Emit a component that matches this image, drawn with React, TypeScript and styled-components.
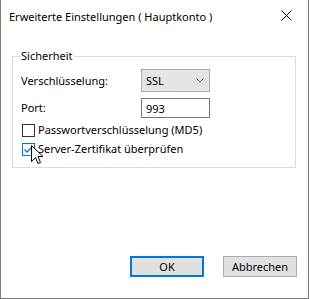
import styled, { createGlobalStyle } from 'styled-components'

const GlobalStyle = createGlobalStyle`
  html, body {
    margin: 0;
    padding: 0;
    background: #ffffff;
  }
  body {
    font-family: 'Noto Sans', 'Liberation Sans', sans-serif;
    font-size: 11px;
    color: #000000;
  }
`

const Window = styled.div`
  width: 309px;
  height: 299px;
  box-sizing: border-box;
  border: 1px solid #7a7a7a;
  border-top: none;
  background: #ffffff;
  display: flex;
  flex-direction: column;
`

const TitleBar = styled.div`
  height: 31px;
  display: flex;
  align-items: center;
  justify-content: space-between;
  padding: 0 0 0 8px;
  flex-shrink: 0;
`

const Title = styled.span`
  line-height: 16px;
  margin-top: 2px;
`

const CloseButton = styled.div`
  width: 46px;
  height: 31px;
  display: flex;
  align-items: center;
  justify-content: center;
  margin-right: -1px;
`

const GroupBox = styled.fieldset`
  margin: 17px 12px 0 11px;
  padding: 5px 8px 10px 8px;
  border: 1px solid #dcdcdc;
  min-width: 0;
  display: flex;
  flex-direction: column;
`

const Legend = styled.legend`
  padding: 0 1px 0 0;
  margin-left: 0;
  line-height: 16px;
`

const FieldRow = styled.div<{ $mt?: number }>`
  display: grid;
  grid-template-columns: 120px 69px;
  align-items: center;
  margin-top: ${(p) => p.$mt ?? 0}px;
`

const Label = styled.span`
  line-height: 16px;
`

const Combo = styled.div`
  height: 23px;
  box-sizing: border-box;
  border: 1px solid #adadad;
  background: #e5e5e5;
  display: flex;
  align-items: center;
  justify-content: space-between;
  padding: 0 5px 0 4px;
`

const TextInput = styled.div`
  height: 20px;
  box-sizing: border-box;
  border: 1px solid #7a7a7a;
  background: #ffffff;
  display: flex;
  align-items: center;
  padding: 0 4px;
`

const CheckRow = styled.div<{ $mt?: number }>`
  position: relative;
  display: flex;
  align-items: center;
  gap: 3px;
  height: 16px;
  margin-top: ${(p) => p.$mt ?? 0}px;
  margin-left: 1px;
`

const Box = styled.div<{ $checked?: boolean }>`
  width: 13px;
  height: 13px;
  box-sizing: border-box;
  border: 1px solid ${(p) => (p.$checked ? '#0078d7' : '#333333')};
  background: #ffffff;
  display: flex;
  align-items: center;
  justify-content: center;
`

const Cursor = styled.svg`
  position: absolute;
  left: 9px;
  top: 4px;
`

const ButtonBar = styled.div`
  margin-top: auto;
  display: flex;
  justify-content: flex-end;
  gap: 19px;
  padding: 0 11px 21px 0;
`

const Button = styled.div<{ $default?: boolean }>`
  width: 74px;
  height: 21px;
  box-sizing: border-box;
  background: #e1e1e1;
  border: ${(p) => (p.$default ? '2px solid #0078d7' : '1px solid #adadad')};
  display: flex;
  align-items: center;
  justify-content: center;
`

const App = () => {
  return (
    <>
      <GlobalStyle />
      <Window>
        <TitleBar>
          <Title>Erweiterte Einstellungen ( Hauptkonto )</Title>
          <CloseButton>
            <svg width="11" height="11" viewBox="0 0 11 11">
              <path d="M0.5 0.5 L10.5 10.5 M10.5 0.5 L0.5 10.5" stroke="#000" strokeWidth="1" fill="none" />
            </svg>
          </CloseButton>
        </TitleBar>
        <GroupBox>
          <Legend>Sicherheit</Legend>
          <FieldRow>
            <Label>Verschlüsselung:</Label>
            <Combo>
              <span>SSL</span>
              <svg width="8" height="5" viewBox="0 0 8 5">
                <path d="M0.5 0.5 L4 4 L7.5 0.5" stroke="#606060" strokeWidth="1" fill="none" />
              </svg>
            </Combo>
          </FieldRow>
          <FieldRow $mt={6}>
            <Label>Port:</Label>
            <TextInput>993</TextInput>
          </FieldRow>
          <CheckRow $mt={4}>
            <Box />
            <Label>Passwortverschlüsselung (MD5)</Label>
          </CheckRow>
          <CheckRow $mt={3}>
            <Box $checked>
              <svg width="11" height="11" viewBox="0 0 11 11">
                <path d="M1.5 5.5 L4 8 L9.5 2.5" stroke="#0078d7" strokeWidth="1.3" fill="none" />
              </svg>
            </Box>
            <Label>Server-Zertifikat überprüfen</Label>
            <Cursor width="13" height="21" viewBox="0 0 13 21">
              <path
                d="M0.5 0.5 L0.5 16.5 L4.5 12.5 L7 18.5 L9.5 17.5 L7 11.5 L12 11.5 Z"
                fill="#ffffff"
                stroke="#000000"
                strokeWidth="1"
                strokeLinejoin="miter"
              />
            </Cursor>
          </CheckRow>
        </GroupBox>
        <ButtonBar>
          <Button $default>OK</Button>
          <Button>Abbrechen</Button>
        </ButtonBar>
      </Window>
    </>
  )
}

export default App
